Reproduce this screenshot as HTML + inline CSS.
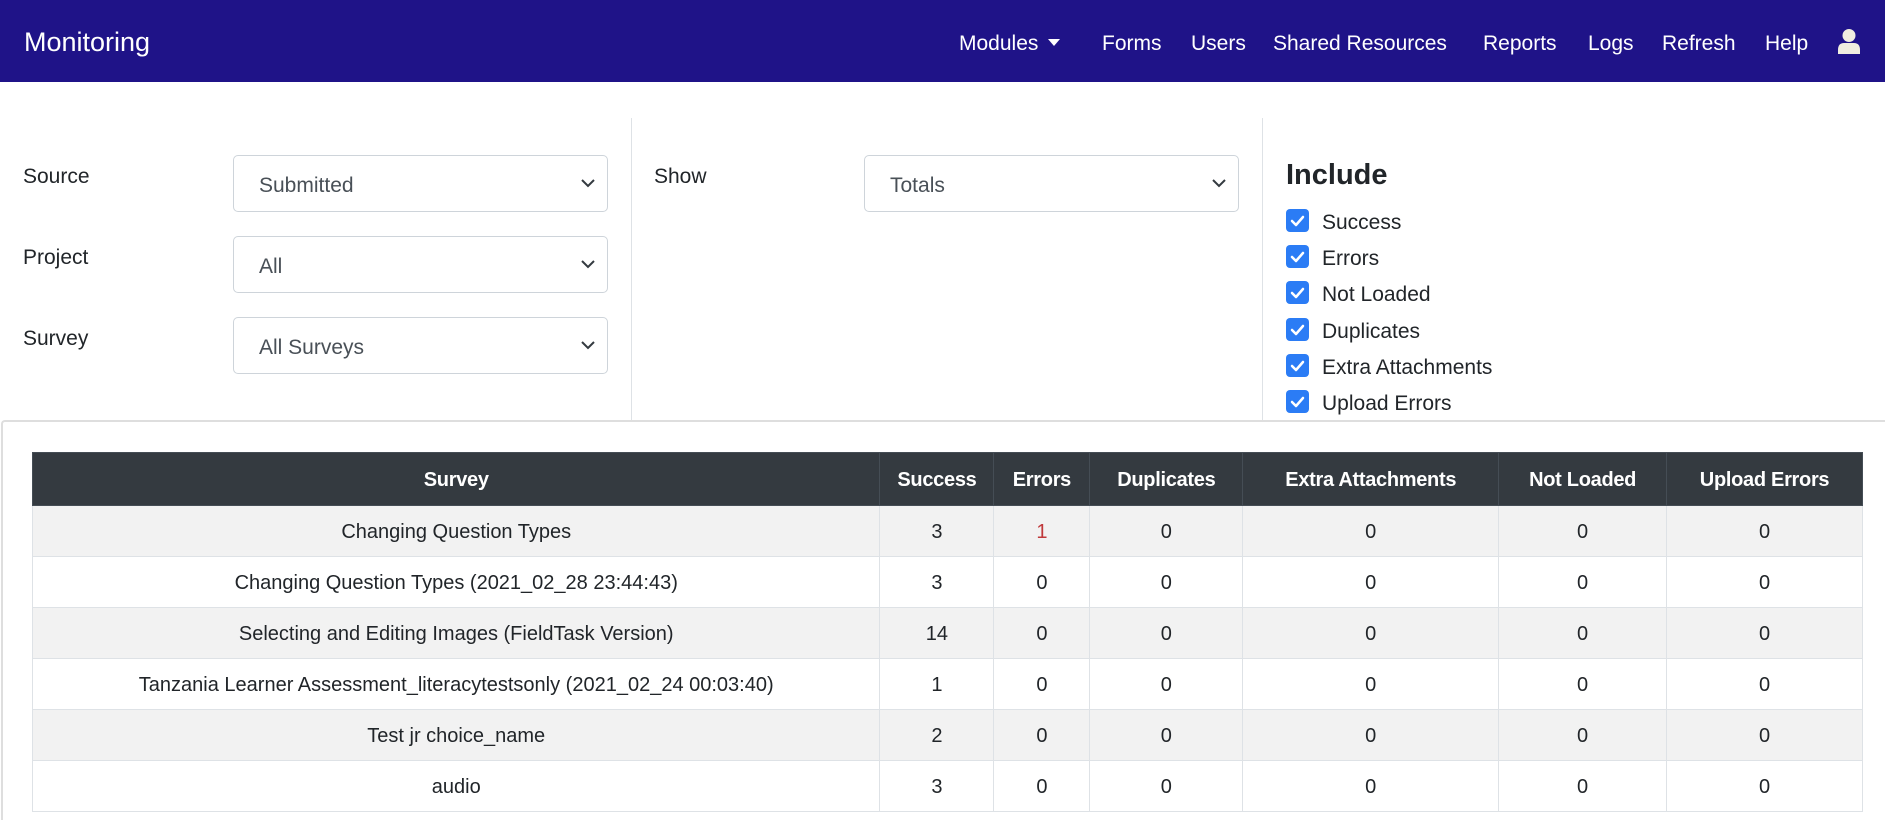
<!DOCTYPE html>
<html><head><meta charset="utf-8"><style>
*{box-sizing:border-box;margin:0;padding:0}
body{width:1885px;height:801px;overflow:hidden;background:#fff;font-family:"Liberation Sans",sans-serif;color:#212529;position:relative}
.nav{position:absolute;left:0;top:0;width:1885px;height:82px;background:#1f1388}
.brand{position:absolute;left:24px;top:27px;font-size:27px;color:#fff}
.ni{position:absolute;top:32px;font-size:21px;color:#fff;white-space:nowrap}
.lbl{position:absolute;font-size:21px;color:#212529}
.sel{position:absolute;height:57px;border:1px solid #ced4da;border-radius:5px;font-size:21px;padding:18px 0 0 25px;color:#495057}
.sel svg{position:absolute;right:12px;top:22px}
.vd{position:absolute;top:118px;width:1px;height:302px;background:#dee2e6}
.cb{position:absolute;left:1286px;width:23px;height:23px;background:#2b7cf5;border-radius:4px}
.cbt{position:absolute;left:1322px;font-size:21px}
table{position:absolute;left:32px;top:452px;width:1831px;border-collapse:collapse;font-size:20px}
th{background:#343a40;color:#fff;font-weight:bold;height:53px;border:1px solid #454d55;text-align:center;font-size:20px;letter-spacing:-0.3px;padding-top:2px}
td{height:51px;text-align:center;border:1px solid #dee2e6;padding-top:2px}
tr:nth-child(even) td{background:#f2f2f2}
</style></head><body>
<div class="nav">
<div class="brand">Monitoring</div>
<div class="ni" style="left:959px">Modules <span style="display:inline-block;border-left:6px solid transparent;border-right:6px solid transparent;border-top:7px solid #fff;vertical-align:4px;margin-left:4px"></span></div>
<div class="ni" style="left:1102px">Forms</div>
<div class="ni" style="left:1191px">Users</div>
<div class="ni" style="left:1273px">Shared Resources</div>
<div class="ni" style="left:1483px">Reports</div>
<div class="ni" style="left:1588px">Logs</div>
<div class="ni" style="left:1662px">Refresh</div>
<div class="ni" style="left:1765px">Help</div>
<svg style="position:absolute;left:1838px;top:29px" width="22" height="25" viewBox="0 0 22 25"><circle cx="11" cy="6.5" r="6.5" fill="#f0eee0"/><path d="M0 25 V21 Q0 14 6 14 H16 Q22 14 22 21 V25 Z" fill="#f0eee0"/></svg>
</div>

<div class="lbl" style="left:23px;top:165px">Source</div>
<div class="lbl" style="left:23px;top:246px">Project</div>
<div class="lbl" style="left:23px;top:327px">Survey</div>
<div class="sel" style="left:233px;top:155px;width:375px">Submitted<svg width="14" height="10"><path d="M1 2 L7 8 L13 2" stroke="#343a40" stroke-width="2" fill="none"/></svg></div>
<div class="sel" style="left:233px;top:236px;width:375px">All<svg width="14" height="10"><path d="M1 2 L7 8 L13 2" stroke="#343a40" stroke-width="2" fill="none"/></svg></div>
<div class="sel" style="left:233px;top:317px;width:375px">All Surveys<svg width="14" height="10"><path d="M1 2 L7 8 L13 2" stroke="#343a40" stroke-width="2" fill="none"/></svg></div>
<div class="vd" style="left:631px"></div>
<div class="lbl" style="left:654px;top:165px">Show</div>
<div class="sel" style="left:864px;top:155px;width:375px">Totals<svg width="14" height="10"><path d="M1 2 L7 8 L13 2" stroke="#343a40" stroke-width="2" fill="none"/></svg></div>
<div class="vd" style="left:1262px"></div>
<div style="position:absolute;left:1286px;top:159px;font-size:29px;font-weight:bold">Include</div>
<div class="cb" style="top:209px"></div><div class="cbt" style="top:211px">Success</div>
<div class="cb" style="top:245px"></div><div class="cbt" style="top:247px">Errors</div>
<div class="cb" style="top:281px"></div><div class="cbt" style="top:283px">Not Loaded</div>
<div class="cb" style="top:318px"></div><div class="cbt" style="top:320px">Duplicates</div>
<div class="cb" style="top:354px"></div><div class="cbt" style="top:356px">Extra Attachments</div>
<div class="cb" style="top:390px"></div><div class="cbt" style="top:392px">Upload Errors</div>
<svg style="position:absolute;left:0;top:0;pointer-events:none" width="1885" height="801">
<g stroke="#fff" stroke-width="2.5" fill="none" stroke-linecap="round" stroke-linejoin="round">
<path d="M1292 221 l4 4 l7 -8"/><path d="M1292 257 l4 4 l7 -8"/><path d="M1292 293 l4 4 l7 -8"/><path d="M1292 330 l4 4 l7 -8"/><path d="M1292 366 l4 4 l7 -8"/><path d="M1292 402 l4 4 l7 -8"/>
</g></svg>
<div style="position:absolute;left:1px;top:420px;width:1884px;height:400px;border-top:2px solid #dedede;border-left:2px solid #dedede;border-top-left-radius:4px"></div>
<table>
<colgroup><col style="width:848px"><col style="width:114px"><col style="width:96px"><col style="width:153px"><col style="width:256px"><col style="width:168px"><col style="width:196px"></colgroup>
<tr><th>Survey</th><th>Success</th><th>Errors</th><th>Duplicates</th><th>Extra Attachments</th><th>Not Loaded</th><th>Upload Errors</th></tr>
<tr><td>Changing Question Types</td><td>3</td><td style="color:#c0393b">1</td><td>0</td><td>0</td><td>0</td><td>0</td></tr>
<tr><td>Changing Question Types (2021_02_28 23:44:43)</td><td>3</td><td>0</td><td>0</td><td>0</td><td>0</td><td>0</td></tr>
<tr><td>Selecting and Editing Images (FieldTask Version)</td><td>14</td><td>0</td><td>0</td><td>0</td><td>0</td><td>0</td></tr>
<tr><td>Tanzania Learner Assessment_literacytestsonly (2021_02_24 00:03:40)</td><td>1</td><td>0</td><td>0</td><td>0</td><td>0</td><td>0</td></tr>
<tr><td>Test jr choice_name</td><td>2</td><td>0</td><td>0</td><td>0</td><td>0</td><td>0</td></tr>
<tr><td>audio</td><td>3</td><td>0</td><td>0</td><td>0</td><td>0</td><td>0</td></tr>
</table>
</body></html>
